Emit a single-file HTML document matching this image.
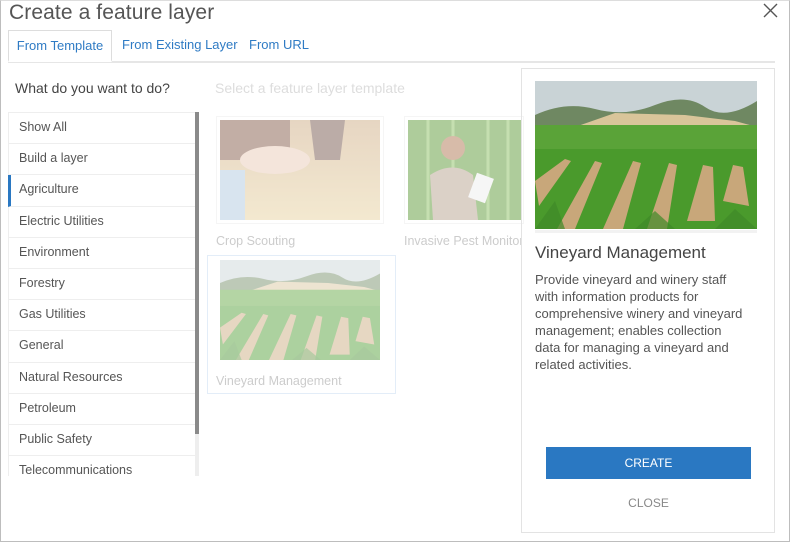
<!DOCTYPE html>
<html><head><meta charset="utf-8"><style>
*{box-sizing:border-box;margin:0;padding:0}
body{width:790px;height:542px;overflow:hidden;background:#fff;font-family:"Liberation Sans",sans-serif;position:relative}
.frame{position:absolute;left:0;top:0;width:790px;height:542px;border:1px solid #bdbdbd;border-top-color:#ddd}
.abs{position:absolute}
.title{left:9px;top:1px;font-size:21px;color:#555;letter-spacing:.1px}
.tab{top:30px;height:32px;font-size:13px;color:#2f7bc4;line-height:30px}
.list{left:8px;top:112px;width:187px;height:364px;overflow:hidden;border-top:1px solid #eee}
.item{height:31.2px;border-bottom:1px solid #eee;border-left:1px solid #eee;font-size:12.5px;color:#555;padding-left:10px;line-height:29px}
.item.sel{border-left:3px solid #2a78c2;padding-left:8px}
.lbl{font-size:12.5px;color:#ccc}
.desc{left:535px;top:271px;width:240px;font-size:13px;line-height:17px;color:#555;white-space:nowrap}
</style></head><body>
<div class="frame"></div>
<div class="abs title">Create a feature layer</div>
<svg class="abs" style="left:763px;top:3px" width="15" height="15"><path d="M1 1L14 14M14 1L1 14" stroke="#555" stroke-width="1.4"/></svg>
<div class="abs" style="left:8px;top:61px;width:767px;height:2px;background:#e6e6e6"></div>
<div class="abs tab" style="left:8px;width:104px;border:1px solid #ddd;border-bottom:2px solid #fff;background:#fff;text-align:center">From Template</div>
<div class="abs tab" style="left:122px">From Existing Layer</div>
<div class="abs tab" style="left:249px">From URL</div>
<div class="abs" style="left:15px;top:80px;font-size:14px;color:#444">What do you want to do?</div>
<div class="abs" style="left:215px;top:80px;font-size:14px;color:#ddd">Select a feature layer template</div>
<div class="abs list">
<div class="item">Show All</div><div class="item">Build a layer</div><div class="item sel">Agriculture</div><div class="item">Electric Utilities</div><div class="item">Environment</div><div class="item">Forestry</div><div class="item">Gas Utilities</div><div class="item">General</div><div class="item">Natural Resources</div><div class="item">Petroleum</div><div class="item">Public Safety</div><div class="item">Telecommunications</div>
</div>
<div class="abs" style="left:195px;top:112px;width:4px;height:364px;background:#eee"></div>
<div class="abs" style="left:195px;top:112px;width:4px;height:322px;background:#8a8a8a"></div>

<svg width="0" height="0" style="position:absolute"><defs>
<symbol id="vine" viewBox="0 0 222 148" preserveAspectRatio="none">
<rect width="222" height="148" fill="#4a9a2c"/>
<rect width="222" height="40" fill="#c9d3d6"/>
<path d="M0 34Q30 20 60 28T120 24T170 26T222 20V46H0Z" fill="#6f8862"/>
<path d="M40 46L80 32L150 34L200 40L222 46V52H40Z" fill="#d9c59a"/>
<rect y="44" width="222" height="24" fill="#5aa338"/>
<g fill="#c8a77a">
<path d="M0 100L30 78L36 80L4 125Z"/><path d="M22 148L60 80L67 82L40 148Z"/><path d="M68 148L98 80L106 82L88 148Z"/><path d="M112 148L134 82L142 84L132 148Z"/><path d="M152 140L168 84L178 86L180 140Z"/><path d="M188 120L198 84L208 86L214 125Z"/>
</g>
<g fill="#3f8a28" opacity=".7"><path d="M0 148L20 120L30 148Z"/><path d="M100 148L120 130L140 148Z"/><path d="M180 148L200 128L222 148Z"/></g>
</symbol>
</defs></svg>

<div class="abs" style="left:216px;top:116px;width:168px;height:108px;border:1px solid #f5f5f5"></div>
<svg class="abs" style="left:220px;top:120px;opacity:.45" width="160" height="100">
<defs><linearGradient id="w" x1="0" y1="0" x2="0" y2="1"><stop offset="0" stop-color="#caa57a"/><stop offset="1" stop-color="#e6cf98"/></linearGradient></defs>
<rect width="160" height="100" fill="url(#w)"/><rect width="70" height="40" fill="#7a4e3a"/><path d="M90 0H125L120 40H95Z" fill="#6a4a3e"/>
<ellipse cx="55" cy="40" rx="35" ry="14" fill="#e8c6b0"/><rect x="0" y="50" width="25" height="50" fill="#aac4dc"/></svg>
<div class="abs lbl" style="left:216px;top:234px">Crop Scouting</div>

<div class="abs" style="left:404px;top:116px;width:120px;height:108px;border:1px solid #f5f5f5"></div>
<svg class="abs" style="left:408px;top:120px;opacity:.5" width="114" height="100">
<rect width="114" height="100" fill="#5f9a3a"/><path d="M20 0V100M45 0V60M80 0V100M100 0V100" stroke="#8dc063" stroke-width="3"/>
<circle cx="45" cy="28" r="12" fill="#b07a55"/><path d="M25 100L22 55Q45 40 65 55L70 100Z" fill="#b8a490"/><rect x="64" y="55" width="18" height="26" fill="#eee" transform="rotate(20 73 68)"/></svg>
<div class="abs lbl" style="left:404px;top:234px;width:118px;overflow:hidden;white-space:nowrap">Invasive Pest Monitoring</div>

<div class="abs" style="left:207px;top:255px;width:189px;height:139px;border:1px solid #e3edf8"></div>
<svg class="abs" style="left:220px;top:260px;opacity:.45" width="160" height="100"><use href="#vine" width="160" height="100"/></svg>
<div class="abs lbl" style="left:216px;top:374px">Vineyard Management</div>

<div class="abs" style="left:521px;top:68px;width:254px;height:465px;border:1px solid #e3e3e3"></div>
<div class="abs" style="left:535px;top:81px;width:222px;height:152px;border-bottom:3px solid #f2f2f2"></div>
<svg class="abs" style="left:535px;top:81px" width="222" height="148"><use href="#vine" width="222" height="148"/></svg>
<div class="abs" style="left:535px;top:243px;font-size:17px;color:#444">Vineyard Management</div>
<div class="abs desc">Provide vineyard and winery staff<br>with information products for<br>comprehensive winery and vineyard<br>management; enables collection<br>data for managing a vineyard and<br>related activities.</div>
<div class="abs" style="left:546px;top:447px;width:205px;height:32px;background:#2a78c2;color:#fff;font-size:12px;text-align:center;line-height:32px">CREATE</div>
<div class="abs" style="left:546px;top:496px;width:205px;font-size:12px;color:#888;text-align:center">CLOSE</div>
</body></html>
